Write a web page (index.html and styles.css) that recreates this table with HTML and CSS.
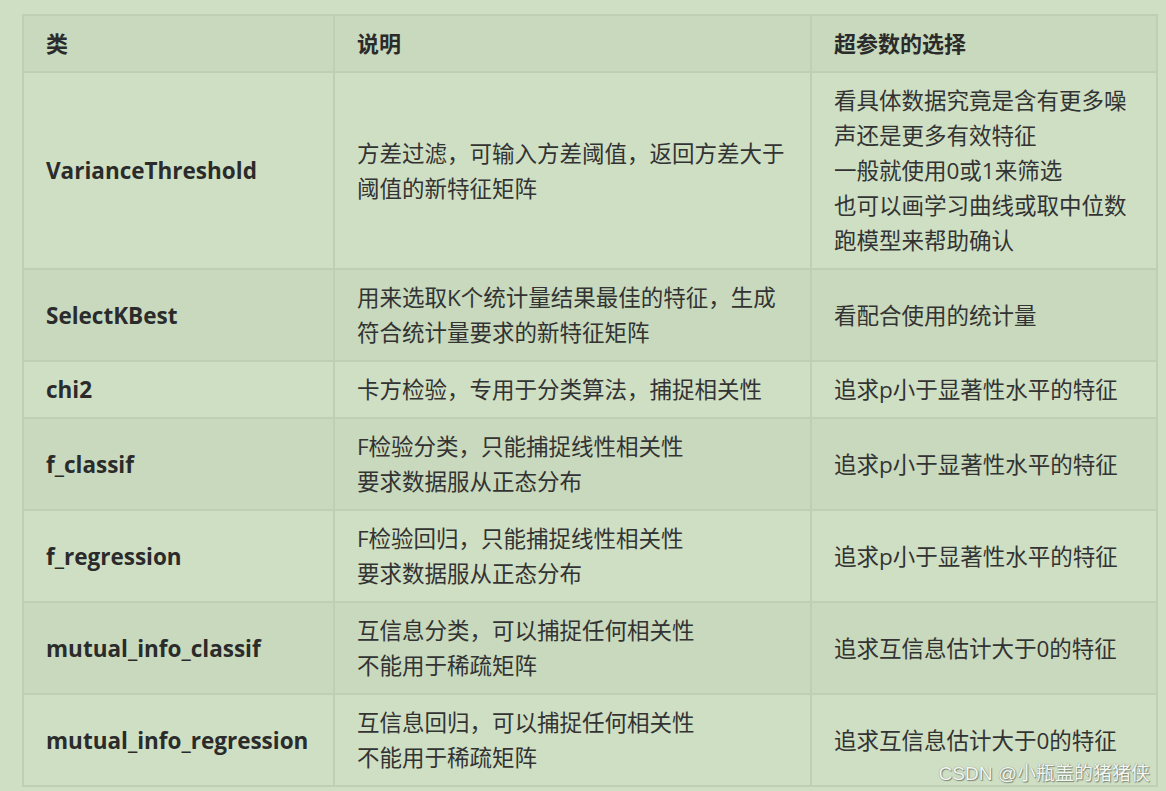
FILE: index.html
```html
<!DOCTYPE html>
<html lang="zh">
<head>
<meta charset="utf-8">
<link rel="stylesheet" href="styles.css">
</head>
<body>
<div class="wrap">
<table class="grid">
  <colgroup>
    <col class="c1"><col class="c2"><col class="c3">
  </colgroup>
  <thead>
    <tr><th>类</th><th>说明</th><th>超参数的选择</th></tr>
  </thead>
  <tbody>
    <tr>
      <td class="name">VarianceThreshold</td>
      <td>方差过滤，可输入方差阈值，返回方差大于<br>阈值的新特征矩阵</td>
      <td>看具体数据究竟是含有更多噪<br>声还是更多有效特征<br>一般就使用0或1来筛选<br>也可以画学习曲线或取中位数<br>跑模型来帮助确认</td>
    </tr>
    <tr>
      <td class="name">SelectKBest</td>
      <td>用来选取K个统计量结果最佳的特征，生成<br>符合统计量要求的新特征矩阵</td>
      <td>看配合使用的统计量</td>
    </tr>
    <tr>
      <td class="name">chi2</td>
      <td>卡方检验，专用于分类算法，捕捉相关性</td>
      <td>追求p小于显著性水平的特征</td>
    </tr>
    <tr>
      <td class="name">f_classif</td>
      <td>F检验分类，只能捕捉线性相关性<br>要求数据服从正态分布</td>
      <td>追求p小于显著性水平的特征</td>
    </tr>
    <tr>
      <td class="name">f_regression</td>
      <td>F检验回归，只能捕捉线性相关性<br>要求数据服从正态分布</td>
      <td>追求p小于显著性水平的特征</td>
    </tr>
    <tr>
      <td class="name">mutual_info_classif</td>
      <td>互信息分类，可以捕捉任何相关性<br>不能用于稀疏矩阵</td>
      <td>追求互信息估计大于0的特征</td>
    </tr>
    <tr>
      <td class="name">mutual_info_regression</td>
      <td>互信息回归，可以捕捉任何相关性<br>不能用于稀疏矩阵</td>
      <td>追求互信息估计大于0的特征</td>
    </tr>
  </tbody>
</table>
<div class="watermark">CSDN @小瓶盖的猪猪侠</div>
</div>
</body>
</html>
```
FILE: styles.css
```css
html, body {
  margin: 0;
  padding: 0;
  background: #cfdfc4;
}
body {
  width: 1166px;
  height: 791px;
  overflow: hidden;
  font-family: "Open Sans", "Noto Sans CJK SC", sans-serif;
  color: #333333;
}
.wrap {
  position: relative;
  padding: 14px 0 0 22px;
  height: 791px;
  box-sizing: border-box;
}
.grid {
  border-collapse: collapse;
  table-layout: fixed;
  width: 1134px;
  font-size: 22.5px;
  line-height: 35px;
}
.c1 { width: 311px; }
.c2 { width: 477px; }
.c3 { width: 346px; }
.grid th,
.grid td {
  border: 2px solid #bdcfb4;
  padding: 10px 22px;
  text-align: left;
  vertical-align: middle;
  white-space: nowrap;
}
.grid th {
  font-weight: 700;
  color: #2b2b2b;
  font-size: 22px;
}
.grid thead tr,
.grid tbody tr:nth-child(even) {
  background: #c8d9bd;
}
.grid td.name {
  font-weight: 700;
  color: #2b2b2b;
  font-size: 22.5px;
}
.watermark {
  position: absolute;
  right: 16px;
  bottom: 6px;
  font-family: "Liberation Sans", "Noto Sans CJK SC", sans-serif;
  font-size: 19px;
  color: #f4f6f2;
  text-shadow: 0 0 1px #6f7a6a, 1px 1px 1px #7d8a78;
}
```
